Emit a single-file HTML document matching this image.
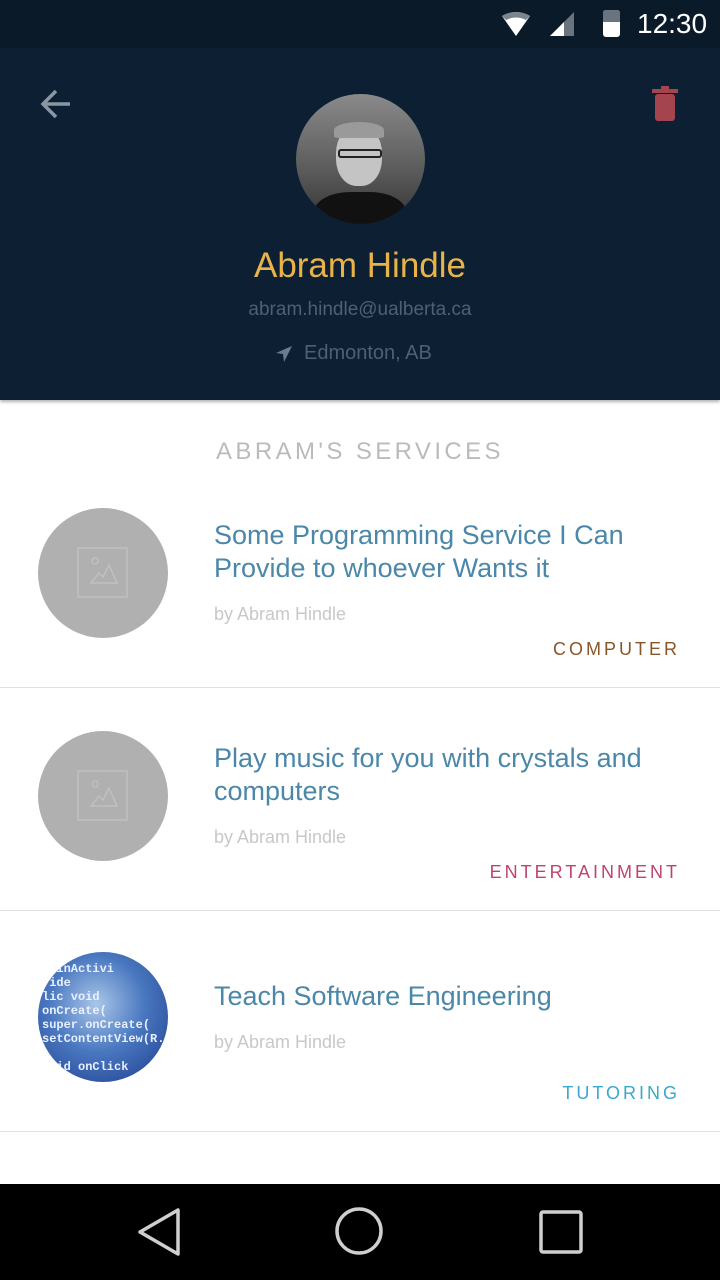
<!DOCTYPE html>
<html><head><meta charset="utf-8"><style>
*{margin:0;padding:0;box-sizing:border-box}
body{width:720px;height:1280px;background:#fff;font-family:"Liberation Sans",sans-serif;position:relative;overflow:hidden}
.abs{position:absolute}
.sb{left:0;top:0;width:720px;height:48px;background:#0a1a29}
.hd{left:0;top:48px;width:720px;height:352px;background:#0c1f33;box-shadow:0 2px 3px rgba(0,0,0,.3)}
.t{font-weight:300;white-space:nowrap}
.row{left:0;width:720px;border-bottom:1px solid #e0e0e0}
.ph{width:130px;height:130px;border-radius:50%;background:#b0b0b0}
.title{font-size:27px;color:#4a87a8;line-height:33px;font-weight:300}
.by{font-size:18px;color:#c8c8c8}
.cat{font-size:18px;letter-spacing:3px;right:40px}
</style></head><body>
<div class="abs sb"></div>
<svg class="abs" style="left:500px;top:10px" width="36" height="28"><path d="M2 6 Q16 -2 30 6 L16 26Z" fill="#fff"/><path d="M2 6 Q16 -2 30 6 L26 10 Q16 5 6 10Z" fill="#7a8590"/></svg>
<svg class="abs" style="left:550px;top:12px" width="26" height="26"><path d="M24 0V24H0Z" fill="#6a747e"/><path d="M14 10V24H0Z" fill="#fff"/></svg>
<div class="abs" style="left:603px;top:10px;width:17px;height:27px;border-radius:3px;background:#fff"></div>
<div class="abs" style="left:603px;top:10px;width:17px;height:12px;border-radius:3px 3px 0 0;background:#6a747e"></div>
<div class="abs t" style="left:637px;top:8px;font-size:28px;color:#fff;font-weight:400">12:30</div>
<div class="abs hd"></div>
<svg class="abs" style="left:38px;top:86px" width="36" height="36"><path d="M32 18H6M18 5L5 18L18 31" stroke="#8a97a3" stroke-width="3.5" fill="none"/></svg>
<svg class="abs" style="left:650px;top:86px" width="32" height="36"><rect x="2" y="3" width="26" height="4" fill="#a4444e"/><rect x="11" y="0" width="8" height="4" fill="#a4444e"/><rect x="5" y="8" width="20" height="27" rx="3" fill="#a4444e"/></svg>
<div class="abs" style="left:296px;top:94px;width:129px;height:130px;border-radius:50%;overflow:hidden;background:linear-gradient(#8a8a8a,#5a5a5a 60%,#333)">
<div class="abs" style="left:40px;top:32px;width:46px;height:60px;border-radius:45%;background:#c4c4c4"></div>
<div class="abs" style="left:38px;top:28px;width:50px;height:16px;border-radius:50% 50% 10% 10%;background:#9a9a9a"></div>
<div class="abs" style="left:42px;top:55px;width:44px;height:9px;border:2px solid #222;border-radius:3px"></div>
<div class="abs" style="left:18px;top:98px;width:92px;height:50px;border-radius:40% 40% 0 0;background:#111"></div>
</div>
<div class="abs t" style="left:0;width:720px;text-align:center;top:246px;font-size:35px;color:#e8b44a">Abram Hindle</div>
<div class="abs t" style="left:0;width:720px;text-align:center;top:299px;font-size:19px;color:#4e6072">abram.hindle@ualberta.ca</div>
<svg class="abs" style="left:274px;top:344px" width="20" height="20"><path d="M18 2L2 9L9 10L10 18Z" fill="#6b7c8c"/></svg>
<div class="abs t" style="left:304px;top:342px;font-size:20px;color:#4e6072">Edmonton, AB</div>
<div class="abs t" style="left:0;width:720px;text-align:center;top:438px;font-size:24px;letter-spacing:3.4px;color:#bbb">ABRAM'S SERVICES</div>

<div class="abs row" style="top:480px;height:208px"></div>
<div class="abs ph" style="left:38px;top:508px"></div>
<svg class="abs" style="left:77px;top:547px" width="52" height="52"><g stroke="#c0c0c0" fill="none" stroke-width="1.5"><rect x="1" y="1" width="49" height="49"/><circle cx="18" cy="14" r="3"/><path d="M14 36L22 26L26 30L32 18L40 36Z"/></g></svg>
<div class="abs title" style="left:214px;top:519px">Some Programming Service I Can<br>Provide to whoever Wants it</div>
<div class="abs t by" style="left:214px;top:604px">by Abram Hindle</div>
<div class="abs t cat" style="top:639px;color:#8a5526">COMPUTER</div>

<div class="abs row" style="top:688px;height:223px"></div>
<div class="abs ph" style="left:38px;top:731px"></div>
<svg class="abs" style="left:77px;top:770px" width="52" height="52"><g stroke="#c0c0c0" fill="none" stroke-width="1.5"><rect x="1" y="1" width="49" height="49"/><circle cx="18" cy="14" r="3"/><path d="M14 36L22 26L26 30L32 18L40 36Z"/></g></svg>
<div class="abs title" style="left:214px;top:742px">Play music for you with crystals and<br>computers</div>
<div class="abs t by" style="left:214px;top:827px">by Abram Hindle</div>
<div class="abs t cat" style="top:862px;color:#c0446a">ENTERTAINMENT</div>

<div class="abs row" style="top:911px;height:221px"></div>
<div class="abs" style="left:38px;top:952px;width:130px;height:130px;border-radius:50%;background:radial-gradient(circle at 45% 40%,#a9c6e8 0,#4a78c0 45%,#1c3a8a 100%);overflow:hidden;font:bold 12px 'Liberation Mono',monospace;color:#e8f0ff;line-height:14px;padding:10px 0 0 4px">MainActivi<br>ride<br>lic void onCreate(<br>super.onCreate(<br>setContentView(R.<br><br>void onClick</div>
<div class="abs title" style="left:214px;top:980px">Teach Software Engineering</div>
<div class="abs t by" style="left:214px;top:1032px">by Abram Hindle</div>
<div class="abs t cat" style="top:1083px;color:#3aa7cf">TUTORING</div>

<div class="abs" style="left:0;top:1184px;width:720px;height:96px;background:#000"></div>
<svg class="abs" style="left:0;top:1184px" width="720" height="96"><g stroke="#cfcfcf" stroke-width="3.5" fill="none"><path d="M178 26L178 70L140 48Z" stroke-linejoin="round"/><circle cx="359" cy="47" r="22"/><rect x="541" y="28" width="40" height="40" rx="2"/></g></svg>
</body></html>
